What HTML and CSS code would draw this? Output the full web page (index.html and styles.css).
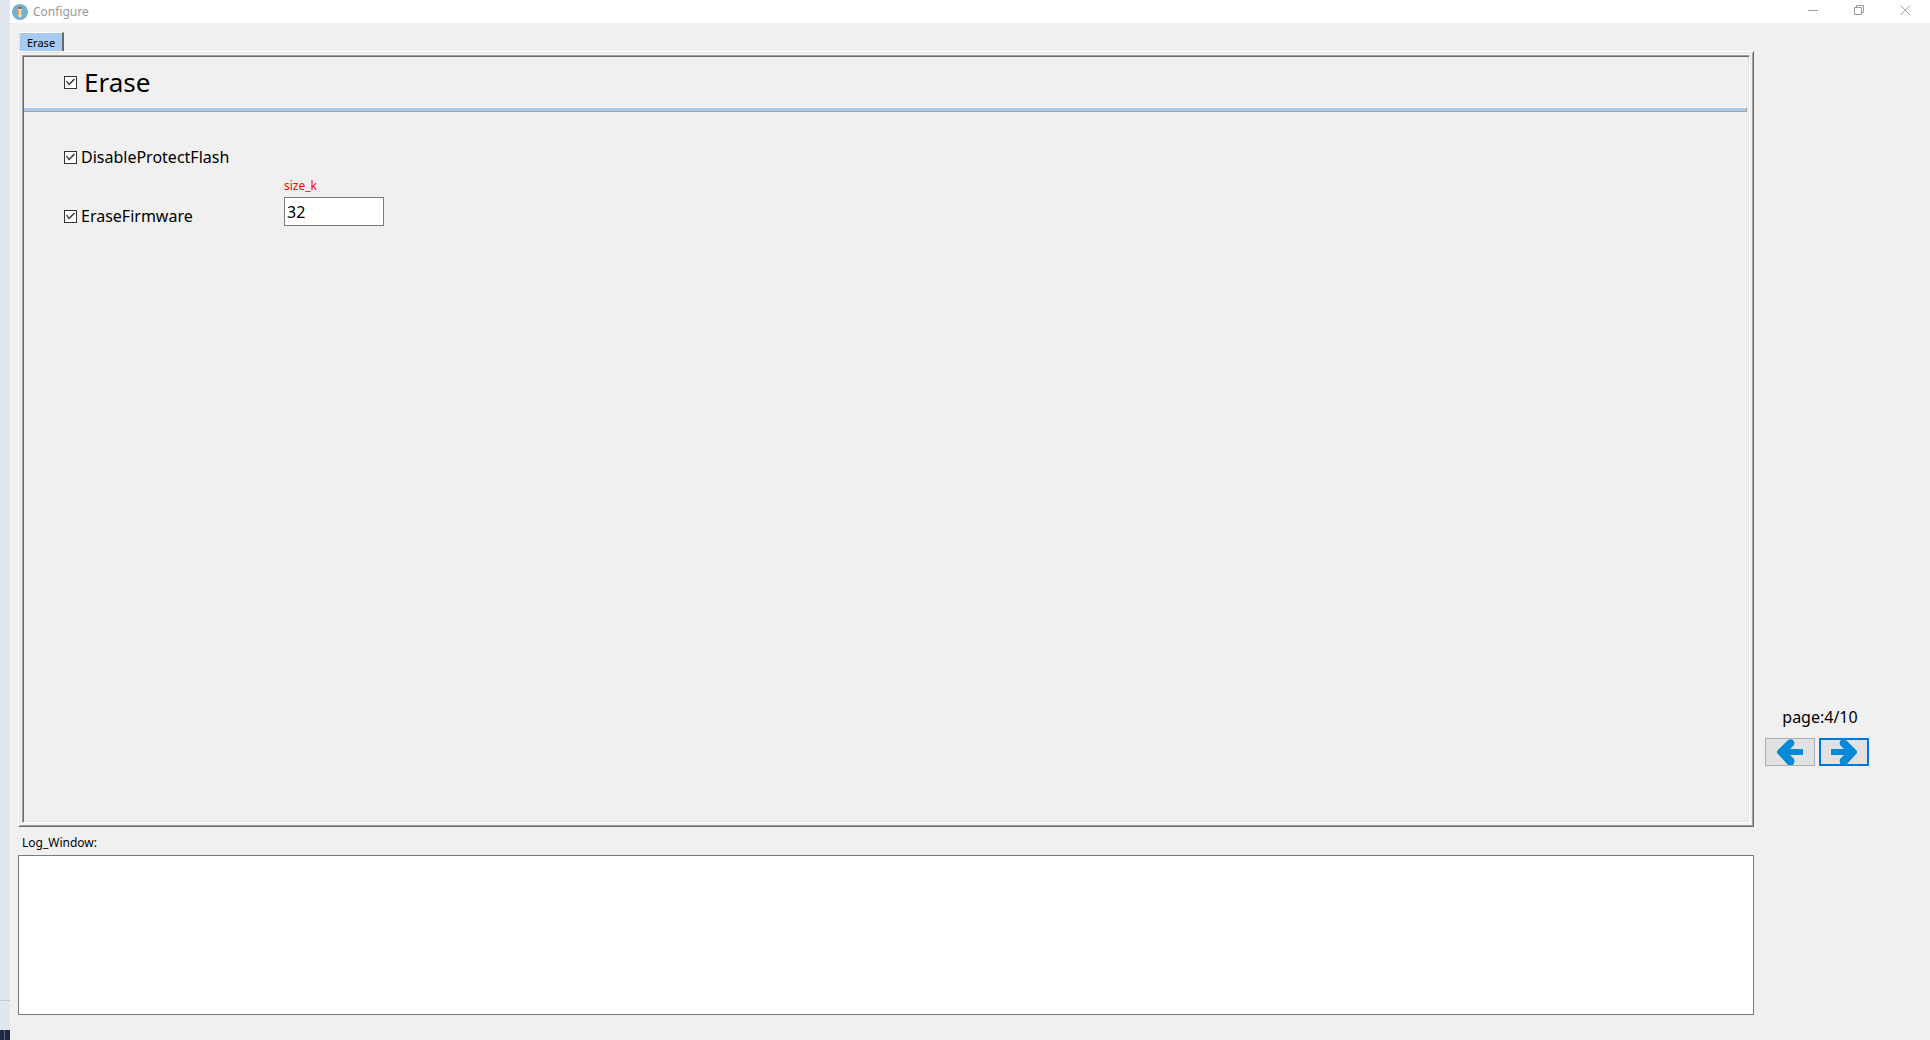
FILE: index.html
```html
<!DOCTYPE html>
<html lang="en">
<head>
  <meta charset="UTF-8" />
  <meta name="viewport" content="width=device-width, initial-scale=1.0"/>
  <title>Configure</title>
  <link rel="stylesheet" href="styles.css">
</head>
<body>
  <!-- Strip of the desktop left of the window -->
  <div class="desktop">
    <div class="desktop-line"></div>
    <div class="taskbar"></div>
  </div>

  <div class="window">
    <!-- Title bar -->
    <header class="titlebar">
      <svg class="app-icon" viewBox="0 0 16 16" aria-hidden="true">
        <circle cx="8" cy="8" r="8" fill="#76b1d3"/>
        <path d="M6 5h4v6l-2 3-2-3z" fill="#f3a64f"/>
        <path d="M7 5h2v7H7z" fill="#fbdc9c"/>
        <path d="M6 5h4v1H6z" fill="#e6e9ee"/>
        <path d="M6 5V3q2-1 4 0v2z" fill="#d0564a"/>
        <path d="M6 11h4l-2 3z" fill="#f4e3cc"/>
      </svg>
      <span class="title">Configure</span>
      <div class="window-controls">
        <button type="button" aria-label="Minimize">
          <svg viewBox="0 0 11 11"><path d="M0 5.5h10"/></svg>
        </button>
        <button type="button" aria-label="Restore">
          <svg viewBox="0 0 11 11"><path d="M.5 2.5h7v7h-7zM2.5 2.5v-2h7v7h-2"/></svg>
        </button>
        <button type="button" aria-label="Close">
          <svg viewBox="0 0 11 11"><path d="M.5.5l9.500 9.500M10 .5L.5 10"/></svg>
        </button>
      </div>
    </header>

    <div class="content">
      <!-- Tabs and the current page -->
      <main class="left">
        <div class="tabs" role="tablist">
          <button type="button" class="tab" role="tab" aria-selected="true">Erase</button>
        </div>
        <div class="notebook">
          <form class="page">
            <div class="page-header">
              <input type="checkbox" id="erase" checked />
              <label for="erase">Erase</label>
            </div>
            <div class="separator"></div>
            <div class="options">
              <div class="option">
                <input type="checkbox" id="disableProtectFlash" checked />
                <label for="disableProtectFlash">DisableProtectFlash</label>
              </div>
              <div class="option">
                <input type="checkbox" id="eraseFirmware" checked />
                <label for="eraseFirmware">EraseFirmware</label>
              </div>
              <div class="field">
                <label for="sizeK">size_k</label>
                <input type="text" id="sizeK" value="32" />
              </div>
            </div>
          </form>
        </div>

        <!-- Log output -->
        <label class="log-label" for="log">Log_Window:</label>
        <textarea class="log" id="log" readonly></textarea>
      </main>

      <!-- Page navigation -->
      <nav class="pager">
        <span class="page-count">page:4/10</span>
        <div class="pager-buttons">
          <button type="button" aria-label="Previous page">
            <svg viewBox="0 0 26 26"><path d="M0 12L10 2q3-3 6-1q2 2 1 5l-4 4h13v6H13l4 4q1 3-1 6h-5L0 14z"/></svg>
          </button>
          <button type="button" class="active" aria-label="Next page">
            <svg viewBox="0 0 26 26"><path d="M26 12L16 2q-3-3-6-1q-2 2-1 5l4 4H0v6h13l-4 4q-1 3 1 6h5l11-12z"/></svg>
          </button>
        </div>
      </nav>
    </div>
  </div>
</body>
</html>
```
FILE: styles.css
```css
:root {
  --face: #f0f0f0;
  --light: #ffffff;
  --light-soft: #e3e3e3;
  --shadow: #a0a0a0;
  --shadow-dark: #696969;
  --blue: #a6caf0;
  --arrow: #0489d6;
  --ui-font: Tahoma, "Noto Sans", sans-serif;
}

* {
  box-sizing: border-box;
}

body {
  margin: 0;
  min-height: 100vh;
  display: flex;
  background: var(--face);
  font-family: var(--ui-font);
  font-size: 16px;
  line-height: 20px;
  color: #000;
}

button,
input,
textarea {
  margin: 0;
  padding: 0;
  font: inherit;
  color: inherit;
  border-radius: 0;
  outline: none;
}

/* Desktop strip */
.desktop {
  width: 10px;
  display: flex;
  flex-direction: column;
  justify-content: flex-end;
  background: #e1e6ef;
}

.desktop-line {
  height: 1px;
  margin-bottom: 29px;
  background: #c4c9cf;
}

.taskbar {
  height: 10px;
  background: linear-gradient(to right, #1b2844 4px, #5a6478 4px, #5a6478 5px, #1b2844 5px);
}

/* Window */
.window {
  flex: 1;
  display: flex;
  flex-direction: column;
}

.titlebar {
  height: 23px;
  display: flex;
  align-items: center;
  padding: 0 2px;
  background: #fff;
}

.app-icon {
  width: 16px;
  height: 16px;
}

.title {
  margin-left: 5px;
  font-family: "Segoe UI", "Noto Sans", sans-serif;
  font-size: 12px;
  color: #999;
}

.window-controls {
  margin-left: auto;
  display: flex;
}

.window-controls button {
  width: 46px;
  height: 23px;
  padding-bottom: 2px;
  display: flex;
  align-items: center;
  justify-content: center;
  background: none;
  border: none;
}

.window-controls svg {
  width: 11px;
  height: 11px;
  fill: none;
  stroke: #999;
}

.content {
  flex: 1;
  display: flex;
  padding: 9px 0 25px 8px;
}

.left {
  flex: 1;
  display: flex;
  flex-direction: column;
}

/* Notebook */
.tabs {
  display: flex;
  padding-left: 1px;
}

.tab {
  height: 20px;
  padding: 1px 7px 0;
  background: var(--blue);
  border: solid;
  border-width: 1px 2px 0 1px;
  border-color: var(--light) var(--shadow-dark) var(--light) var(--light-soft);
  font-size: 11px;
  line-height: 18px;
}

.notebook {
  flex: 1;
  display: flex;
  margin-top: -1px;
  padding: 3px;
  border: 1px solid;
  border-color: var(--light) var(--shadow-dark) var(--shadow-dark) var(--light);
  box-shadow: inset 1px 1px var(--light-soft), inset -1px -1px var(--shadow);
}

.page {
  flex: 1;
  padding: 1px;
  border: 1px solid;
  border-color: var(--shadow) var(--light) var(--light) var(--shadow);
  box-shadow: inset 1px 1px var(--shadow-dark), inset -1px -1px var(--light-soft);
}

.page-header {
  height: 50px;
  display: flex;
  align-items: center;
  gap: 7px;
  padding-left: 40px;
  font-size: 26px;
  line-height: 32px;
}

.separator {
  height: 5px;
  margin-right: 1px;
  background: var(--blue);
  border: solid;
  border-width: 1px 1px 1px 0;
  border-color: var(--light) var(--shadow) var(--shadow);
}

/* Tick boxes */
input[type="checkbox"] {
  appearance: none;
  flex: none;
  width: 13px;
  height: 13px;
  background: #fff;
  border: 1px solid #333;
}

input[type="checkbox"]:checked::before {
  content: "";
  display: block;
  width: 11px;
  height: 11px;
  background: #333;
  clip-path: polygon(1px 5px, 2px 4px, 4px 7px, 9px 2px, 10px 3px, 4px 9px);
}

/* Options */
.options {
  display: grid;
  grid-template-columns: 220px 100px;
  row-gap: 10px;
  padding: 35px 0 0 40px;
}

.option {
  grid-column: 1;
  align-self: end;
  display: flex;
  align-items: center;
  gap: 4px;
}

.field {
  grid-column: 2;
  display: flex;
  flex-direction: column;
  gap: 3px;
}

.field label {
  font-size: 12px;
  line-height: 17px;
  color: #f00;
}

.field input {
  width: 100px;
  height: 29px;
  padding: 0 2px;
  background: #fff;
  border: 1px solid #7a7a7a;
}

/* Log */
.log-label {
  margin: 6px 0 2px 4px;
  font-size: 12px;
}

.log {
  display: block;
  width: 100%;
  height: 160px;
  background: #fff;
  border: 1px solid #7a7a7a;
  resize: none;
}

/* Pager */
.pager {
  width: 176px;
  display: flex;
  flex-direction: column;
  justify-content: flex-end;
  padding: 0 61px 249px 11px;
}

.page-count {
  margin-bottom: 11px;
  padding-left: 6px;
  text-align: center;
}

.pager-buttons {
  display: flex;
  gap: 4px;
}

.pager-buttons button {
  width: 50px;
  height: 28px;
  display: flex;
  align-items: center;
  justify-content: center;
  background: #e1e1e1;
  border: 1px solid #adadad;
}

.pager-buttons .active {
  border: 2px solid #0078d7;
}

.pager-buttons svg {
  flex: none;
  width: 26px;
  height: 26px;
  fill: var(--arrow);
}
```
